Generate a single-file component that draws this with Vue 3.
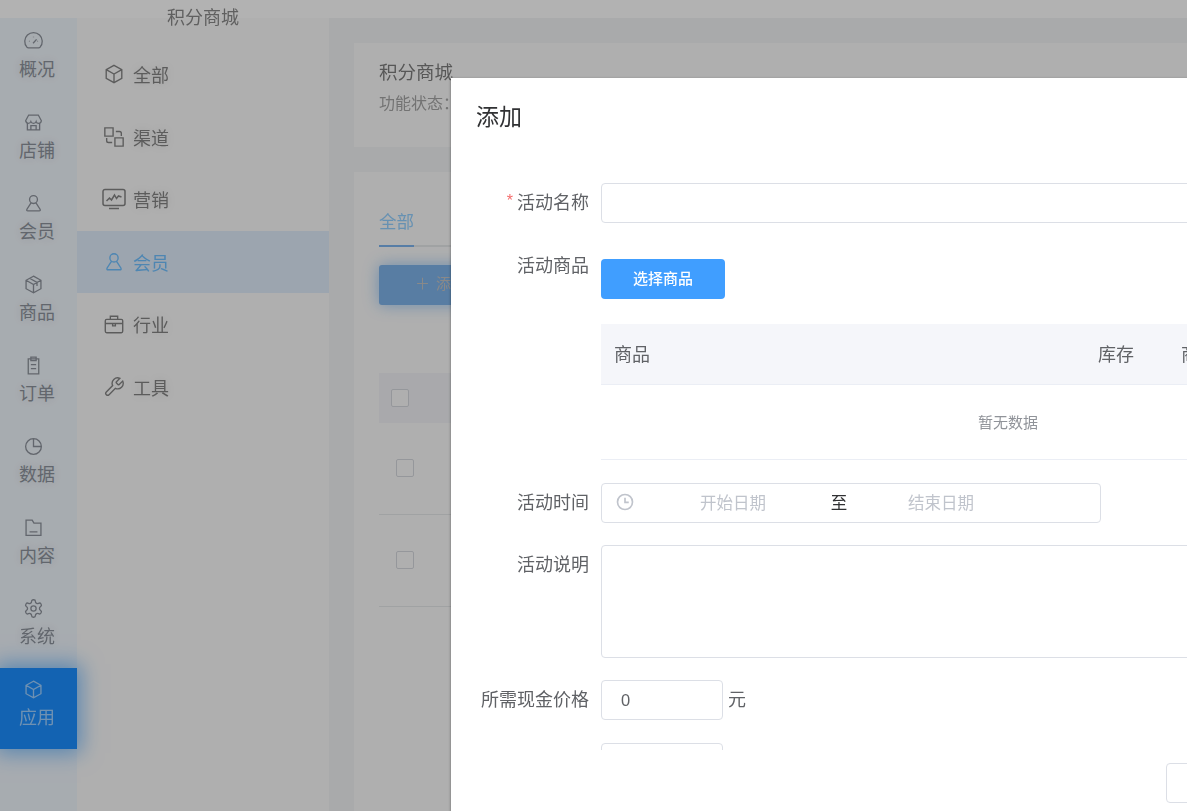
<template>
  <div class="page">
    <div class="topbar"></div>
    <div class="main">
      <aside class="rail">
        <div v-for="item in railItems" :key="item.label" class="rail-item" :class="{ active: item.active }">
          <svg class="rail-icon" viewBox="0 0 24 24"><path :d="item.icon" /></svg>
          <span>{{ item.label }}</span>
        </div>
      </aside>

      <aside class="sidebar">
        <div class="sidebar-title">积分商城</div>
        <div v-for="item in navItems" :key="item.label" class="nav-item" :class="{ active: item.active }">
          <span class="nav-icon-box">
            <svg :class="item.big ? 'nav-icon-big' : 'nav-icon'" viewBox="0 0 24 24"><path :d="item.icon" /></svg>
          </span>
          <span>{{ item.label }}</span>
        </div>
      </aside>

      <div class="content">
        <section class="card head-card">
          <div class="card-title">积分商城</div>
          <div class="card-sub">功能状态：</div>
        </section>
        <section class="card list-card">
          <div class="tabs"><span class="tab">全部</span></div>
          <div class="add-btn"><span class="plus">＋</span>添加活动</div>
          <div class="list-head"><i class="check"></i></div>
          <div class="list-row"><i class="check"></i></div>
          <div class="list-row"><i class="check"></i></div>
        </section>
      </div>
    </div>

    <!-- 弹窗 -->
    <div class="overlay">
      <div class="dialog">
        <div class="dialog-header">添加</div>
        <div class="dialog-body">
          <div class="row row-name">
            <label class="label"><em>*</em>活动名称</label>
            <input class="input" />
          </div>
          <div class="row row-goods">
            <label class="label">活动商品</label>
            <button class="pick-btn">选择商品</button>
          </div>
          <div class="goods-table">
            <div class="table-head">
              <span v-for="col in columns" :key="col">{{ col }}</span>
            </div>
            <div class="table-empty">暂无数据</div>
          </div>
          <div class="row">
            <label class="label">活动时间</label>
            <div class="range">
              <svg class="clock" viewBox="0 0 24 24"><path d="M12 3a9 9 0 1 0 0 18 9 9 0 0 0 0-18z M12 7v5.500h4.500" /></svg>
              <span class="range-text">开始日期</span>
              <span class="range-sep">至</span>
              <span class="range-text end">结束日期</span>
            </div>
          </div>
          <div class="row">
            <label class="label">活动说明</label>
            <textarea class="textarea"></textarea>
          </div>
          <div class="row row-cash">
            <label class="label">所需现金价格</label>
            <input class="input small" value="0" />
            <span class="unit">元</span>
          </div>
          <div class="row">
            <label class="label"></label>
            <input class="input small" />
          </div>
        </div>
        <div class="dialog-footer">
          <button class="cancel-btn"></button>
        </div>
      </div>
    </div>
  </div>
</template>

<script setup>
const cube = 'M12 2.500l8.500 4.700v9.600L12 21.500l-8.500-4.700V7.200z M3.500 7.200L12 12l8.500-4.800 M12 12v9.500'
const user = 'M12 3a4.500 4.500 0 1 0 0 9 4.500 4.500 0 0 0 0-9z M9 11.500L4.500 18.500q-.8 2 1 2h13q1.800 0 1-2L15 11.500'

const railItems = [
  { label: '概况', icon: 'M4.500 18.500a10 10 0 1 1 15 0q-.7.7-1.700.7H6.200q-1 0-1.700-.7z M11.500 14l4-4.500 M7 11.500l.5.3 M12 6.500v.7 M17 11.500l-.5.3' },
  { label: '店铺', icon: 'M6.500 3.500h11l3.500 6.500q-.5 3-3 3t-3-2q-.8 2-3 2t-3-2q-.8 2-3 2t-3-3z M5 13.500v7h14v-7 M9 20v-4.500h6V20' },
  { label: '会员', icon: user },
  { label: '商品', icon: cube + ' M7.500 4.800l8.500 4.800v4' },
  { label: '订单', icon: 'M6 4.500h12v17H6z M9 2.500h6v4H9z M9 11h6 M9 15.500h6' },
  { label: '数据', icon: 'M12 3a9 9 0 1 0 9 9 9 9 0 0 0-9-9z M12 3v9h9' },
  { label: '内容', icon: 'M3.500 3.500h7l2 3.500h8v14h-17z M7.500 17h9' },
  { label: '系统', icon: 'M12.220 2h-.44a2 2 0 0 0-2 2v.18a2 2 0 0 1-1 1.730l-.43.25a2 2 0 0 1-2 0l-.15-.08a2 2 0 0 0-2.730.73l-.22.38a2 2 0 0 0 .73 2.730l.15.1a2 2 0 0 1 1 1.720v.51a2 2 0 0 1-1 1.740l-.15.09a2 2 0 0 0-.73 2.730l.22.38a2 2 0 0 0 2.730.73l.15-.08a2 2 0 0 1 2 0l.43.25a2 2 0 0 1 1 1.730V20a2 2 0 0 0 2 2h.44a2 2 0 0 0 2-2v-.18a2 2 0 0 1 1-1.730l.43-.25a2 2 0 0 1 2 0l.15.08a2 2 0 0 0 2.730-.73l.22-.39a2 2 0 0 0-.73-2.730l-.15-.08a2 2 0 0 1-1-1.740v-.5a2 2 0 0 1 1-1.740l.15-.09a2 2 0 0 0 .73-2.730l-.22-.38a2 2 0 0 0-2.730-.73l-.15.08a2 2 0 0 1-2 0l-.43-.25a2 2 0 0 1-1-1.730V4a2 2 0 0 0-2-2z M15 12a3 3 0 1 1-6 0 3 3 0 0 1 6 0z' },
  { label: '应用', icon: cube, active: true }
]

const navItems = [
  { label: '全部', icon: cube },
  { label: '渠道', icon: 'M2 2h9v9H2z M13 13h9v9h-9z M14 6h4a2 2 0 0 1 2 2v3 M10 18H6a2 2 0 0 1-2-2v-3' },
  { label: '营销', big: true, icon: 'M3 2.500h18a2 2 0 0 1 2 2v12a2 2 0 0 1-2 2H3a2 2 0 0 1-2-2v-12a2 2 0 0 1 2-2z M7 21.500h10 M4.500 14l3-3 2 2 3-5 2 3.500 2-2.500 3 1' },
  { label: '会员', icon: user, active: true },
  { label: '行业', icon: 'M4 7h16a1.500 1.500 0 0 1 1.500 1.500V20a1.500 1.500 0 0 1-1.500 1.500H4A1.500 1.500 0 0 1 2.500 20V8.500A1.500 1.500 0 0 1 4 7z M8 7V3.500h8V7 M2.500 11.500h19 M10.500 11.500v2.500h3v-2.500' },
  { label: '工具', icon: 'M14.700 6.300a1 1 0 0 0 0 1.400l1.600 1.600a1 1 0 0 0 1.400 0l3.770-3.770a6 6 0 0 1-7.940 7.940l-6.910 6.910a2.120 2.120 0 0 1-3-3l6.910-6.910a6 6 0 0 1 7.940-7.940l-3.760 3.760z' }
]

const columns = ['商品', '库存', '商品价格']
</script>

<style>
html,
body {
  margin: 0;
  overflow: hidden;
}
</style>

<style scoped>
.page {
  position: relative;
  width: 100%;
  height: 100vh;
  overflow: hidden;
  background: #f2f4f5;
  font-family: "Liberation Sans", "Noto Sans CJK SC", sans-serif;
}

.topbar {
  height: 18px;
  background: #ffffff;
}

.main {
  display: flex;
  height: calc(100vh - 18px);
  filter: blur(0.5px);
}

.rail {
  flex: none;
  width: 77px;
  padding-top: 2px;
  background: #f0f6fc;
}

.rail-item {
  height: 81px;
  box-sizing: border-box;
  padding: 11px 3px 0 0;
  display: flex;
  flex-direction: column;
  align-items: center;
  font-size: 18px;
  line-height: 26px;
  color: #8d939c;
  text-shadow: 0 0 10px rgba(0, 0, 0, 0.12);
}

.rail-icon {
  width: 21px;
  height: 21px;
  margin-right: 8px;
  margin-bottom: 5px;
  fill: none;
  stroke: currentColor;
  stroke-width: 1.5;
}

.rail-item.active {
  background: #1c8fff;
  color: #a0d0ff;
  box-shadow: 0 0 20px 4px rgba(28, 143, 255, 0.55);
  position: relative;
  text-shadow: none;
}

.sidebar {
  flex: none;
  width: 252px;
  background: #fbfbfb;
}

.sidebar-title {
  margin-top: -18px;
  height: 43px;
  line-height: 36px;
  text-align: center;
  font-size: 18px;
  color: #8a8a8a;
}

.nav-item {
  height: 62.500px;
  display: flex;
  align-items: center;
  padding-left: 25px;
  font-size: 18px;
  color: #858585;
  text-shadow: 0 0 10px rgba(0, 0, 0, 0.12);
}

.nav-item.active {
  background: #e0edfb;
  color: #70c0ff;
  text-shadow: none;
}

.nav-icon-box {
  width: 24px;
  margin-right: 7px;
  display: flex;
  justify-content: center;
}

.nav-icon,
.nav-icon-big {
  width: 22px;
  height: 22px;
  fill: none;
  stroke: currentColor;
  stroke-width: 1.5;
}

.nav-icon-big {
  width: 24px;
  height: 24px;
}

.content {
  flex: 1;
  padding: 25px 0 25px 25px;
  min-width: 0;
}

.card {
  background: #fbfbfb;
  padding: 0 25px;
}

.head-card {
  height: 104px;
  box-sizing: border-box;
  padding-top: 16px;
  margin-bottom: 25px;
}

.card-title {
  font-size: 18.500px;
  line-height: 27px;
  color: #7d7d7d;
}

.card-sub {
  margin-top: 6px;
  font-size: 16px;
  line-height: 24px;
  color: #a5a5a5;
}

.list-card {
  height: 700px;
  padding-top: 35px;
}

.tabs {
  display: flex;
  height: 38px;
  border-bottom: 2px solid #e6e8ea;
  font-size: 17.500px;
}

.tab {
  height: 38px;
  line-height: 30px;
  width: 35px;
  color: #94d0ff;
  border-bottom: 2px solid #7db3ee;
}

.add-btn {
  margin-top: 18px;
  height: 40px;
  width: 180px;
  padding-left: 36px;
  box-sizing: border-box;
  border-radius: 3px;
  background: #7eb3ea;
  color: #c4c4c4;
  font-size: 15px;
  line-height: 38px;
  box-shadow: 0 0 16px rgba(40, 140, 240, 0.45);
}

.plus {
  margin-right: 6px;
}

.list-head {
  margin-top: 68px;
  height: 50px;
  padding-left: 12px;
  display: flex;
  align-items: center;
  background: #f2f3f6;
}

.list-row {
  height: 92px;
  box-sizing: border-box;
  padding: 0 0 2px 17px;
  display: flex;
  align-items: center;
  border-bottom: 1px solid #e6e8ea;
}

.check {
  display: block;
  width: 16px;
  height: 16px;
  border: 1px solid #d6d9de;
  border-radius: 2px;
  background: #fbfbfb;
}

.overlay {
  position: absolute;
  inset: 0;
  background: rgba(0, 0, 0, 0.3);
  overflow: hidden;
}

.dialog {
  width: 964px;
  height: 780px;
  margin: 78px 0 0 451px;
  background: #fff;
  box-shadow: 0 1px 3px rgba(0, 0, 0, 0.4);
}

.dialog-header {
  height: 80px;
  box-sizing: border-box;
  padding-left: 25px;
  line-height: 78px;
  font-size: 23px;
  color: #303133;
}

.dialog-body {
  height: 592px;
  box-sizing: border-box;
  padding-top: 25px;
  overflow: hidden;
  font-size: 18px;
  color: #606266;
}

.row {
  display: flex;
  align-items: flex-start;
  margin-bottom: 22px;
}

.row-name {
  margin-bottom: 36px;
}

.row-goods {
  margin-bottom: 25px;
}

.row-goods .label {
  line-height: 14px;
}

.row-cash {
  margin-bottom: 23px;
}

.label {
  flex: none;
  width: 138px;
  height: 40px;
  margin-right: 12px;
  text-align: right;
  line-height: 40px;
}

.label em {
  font-style: normal;
  color: #f56c6c;
  margin-right: 4px;
  font-size: 16px;
  line-height: 0;
  vertical-align: 3px;
}

.input {
  flex: none;
  width: 814px;
  height: 40px;
  box-sizing: border-box;
  padding: 0 19px;
  border: 1px solid #dcdfe6;
  border-radius: 4px;
  outline: none;
  font: inherit;
  font-size: 16.500px;
  color: #606266;
}

.input.small {
  width: 122px;
}

.unit {
  margin-left: 5px;
  line-height: 40px;
}

.pick-btn {
  width: 124px;
  height: 40px;
  padding: 0 0 3px;
  border: none;
  border-radius: 4px;
  background: #409eff;
  color: #fff;
  font: inherit;
  font-size: 15px;
  font-weight: 500;
}

.goods-table {
  margin-left: 150px;
  margin-bottom: 23px;
  width: 814px;
}

.table-head {
  display: grid;
  grid-template-columns: 484px 83px 150px 1fr;
  height: 61px;
  box-sizing: border-box;
  padding-bottom: 2px;
  align-items: center;
  background: #f5f6fa;
  border-bottom: 1px solid #ebeef5;
}

.table-head span {
  padding-left: 13px;
  font-size: 18px;
}

.table-empty {
  height: 75px;
  box-sizing: border-box;
  line-height: 75px;
  text-align: center;
  border-bottom: 1px solid #ebeef5;
  font-size: 15px;
  color: #909399;
}

.range {
  flex: none;
  width: 500px;
  height: 40px;
  box-sizing: border-box;
  padding: 0 0 2px 13px;
  display: flex;
  align-items: center;
  border: 1px solid #dcdfe6;
  border-radius: 4px;
  font-size: 16.500px;
}

.clock {
  flex: none;
  width: 20px;
  height: 20px;
  margin-right: 2px;
  fill: none;
  stroke: #c0c4cc;
  stroke-width: 2;
}

.range-text {
  width: 192px;
  text-align: center;
  color: #c0c4cc;
}

.range-text.end {
  width: 184px;
}

.range-sep {
  width: 20px;
  text-align: center;
  color: #303133;
}

.textarea {
  flex: none;
  width: 814px;
  height: 113px;
  box-sizing: border-box;
  border: 1px solid #dcdfe6;
  border-radius: 4px;
  outline: none;
  resize: none;
}

.dialog-footer {
  padding: 13px 0 0 715px;
}

.cancel-btn {
  width: 124px;
  height: 40px;
  border: 1px solid #dcdfe6;
  border-radius: 4px;
  background: #fff;
}
</style>
